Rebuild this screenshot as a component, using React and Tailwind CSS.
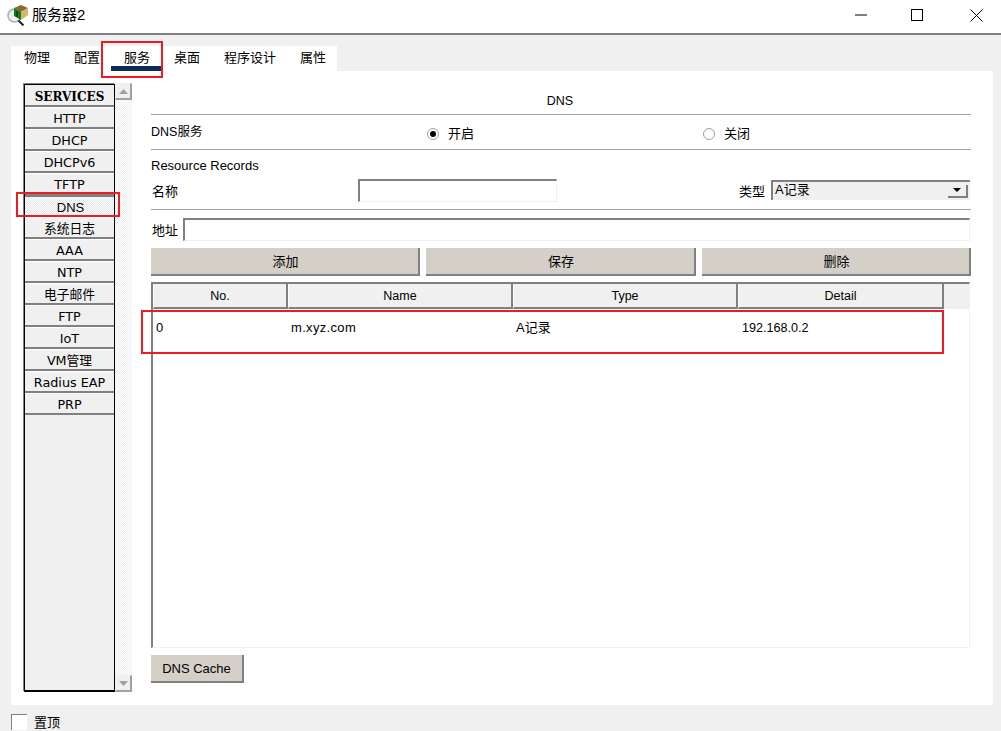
import React from "react";

const services = ["HTTP", "DHCP", "DHCPv6", "TFTP", "DNS", "系统日志", "AAA", "NTP", "电子邮件", "FTP", "IoT", "VM管理", "Radius EAP", "PRP"];
const tabs = ["物理", "配置", "服务", "桌面", "程序设计", "属性"];
const cols = [
  { name: "No.", w: "w-[135px]" },
  { name: "Name", w: "w-[225px]" },
  { name: "Type", w: "w-[225px]" },
  { name: "Detail", w: "w-[206px]" },
];

const font = "font-['Liberation_Sans','Noto_Sans_CJK_SC',sans-serif]";

const Rule = () => <div className="h-px bg-[#a0a0a0]" />;

const GrayButton = ({ children, className }) => (
  <button className={`flex items-center justify-center border-r-2 border-b-2 border-[#808080] bg-[#d4d0c8] pt-[2px] text-[13px] text-black ${className}`}>
    {children}
  </button>
);

const Field = ({ className }) => <div className={`border-t-2 border-l-2 border-t-[#808080] border-l-[#808080] border-r border-b border-r-[#f0f0f0] border-b-[#f0f0f0] bg-white ${className}`} />;

const Radio = ({ on, label, className }) => (
  <div className={`flex items-center gap-[9px] ${className}`}>
    <span className="flex h-[12px] w-[12px] items-center justify-center rounded-full border border-[#a0a0a0] bg-white">
      {on && <span className="h-[6px] w-[6px] rounded-full bg-black" />}
    </span>
    <span className="text-[13px]">{label}</span>
  </div>
);

const AppIcon = () => (
  <svg width="22" height="22" viewBox="0 0 22 22" className="ml-[7px] shrink-0">
    <circle cx="7.5" cy="11.5" r="6.5" fill="#eef2ee" stroke="#a8b0a8" strokeWidth="1.5" />
    <path d="M11.5 16.5l5 5" stroke="#222" strokeWidth="2" />
    <path d="M7 4l7-3 7 3-7 4z" fill="#8a6a2c" />
    <path d="M7 4l7 4v8l-7-4z" fill="#157a1e" />
    <path d="M14 8l7-4v7l-7 5z" fill="#d6b566" />
    <path d="M9 7l2 1v5l-2-1z" fill="#0a4a10" />
  </svg>
);

const ArrowBtn = ({ up }) => (
  <div className="flex h-[17px] w-[17px] items-center justify-center border-r-2 border-b-2 border-[#a0a0a0] border-t border-l border-t-[#f0f0f0] border-l-[#f0f0f0] bg-[#f0f0f0]">
    <svg width="9" height="5" viewBox="0 0 9 5">
      <path d={up ? "M4.5 0L9 5H0z" : "M4.5 5L9 0H0z"} fill="#a0a0a0" />
    </svg>
  </div>
);

export default function App() {
  return (
    <div className={`relative h-[731px] w-[1001px] overflow-hidden bg-[#f0f0f0] text-black ${font}`}>
      {/* title bar */}
      <div className="flex h-[35px] items-center border-b-2 border-[#808080] bg-white pb-[3px]">
        <AppIcon />
        <span className="ml-[3px] text-[15px]">服务器2</span>
        <div className="ml-auto flex items-center">
          <svg width="14" height="2" viewBox="0 0 14 2" className="mr-[42px]"><path d="M0 1h12" stroke="#000" /></svg>
          <div className="mr-[47px] h-[12px] w-[12px] border border-black" />
          <svg width="13" height="13" viewBox="0 0 13 13" className="mr-[18px]"><path d="M.5.5l12 12M12.5.5l-12 12" stroke="#000" /></svg>
        </div>
      </div>

      {/* tabs */}
      <div className="ml-[11px] mt-[11px] flex h-[25px] w-[326px] gap-[24px] bg-white pl-[13px] pt-[4px] text-[13px]">
        {tabs.map((t) => (
          <div key={t} className={t === "服务" ? "relative leading-[16px]" : "leading-[16px]"}>
            {t}
            {t === "服务" && <div className="absolute left-[-13px] top-[16px] h-[5px] w-[50px] bg-[#0e2a56]" />}
          </div>
        ))}
      </div>

      {/* panel */}
      <div className="mx-[11px] flex h-[634px] w-[982px] bg-white pl-[13px] pt-[13px]">
        {/* service list */}
        <div className="flex h-[608px] w-[91px] flex-col border border-b-2 border-[#000] bg-[#f0f0f0] font-['DejaVu_Sans','Noto_Sans_CJK_SC',sans-serif] text-[12.75px] shadow-[-1px_-1px_0_#808080]">
          <div className="flex h-[22px] shrink-0 items-center justify-center border-b-2 border-[#808080] pt-[3px] font-['DejaVu_Serif',serif] text-[12px] font-bold">SERVICES</div>
          {services.map((s) =>
            s === "DNS" ? (
              <div key={s} className="flex h-[22px] shrink-0 items-center justify-center border-t-2 border-[#808080] bg-white bg-[repeating-conic-gradient(#e4e4e4_0_25%,#ffffff_0_50%)] bg-[length:2px_2px] pl-[2px] pt-[2px] font-['Liberation_Sans',sans-serif] text-[13px]">{s}</div>
            ) : (
              <div key={s} className={`flex h-[22px] shrink-0 items-center justify-center border-t border-t-white border-b-2 border-[#808080] pt-[3px] ${s === "TFTP" ? "border-b-0" : ""}`}>{s}</div>
            )
          )}
        </div>
        <div className="-mt-px flex h-[609px] w-[17px] flex-col justify-between bg-[repeating-conic-gradient(#eeeeee_0_25%,#ffffff_0_50%)] bg-[length:2px_2px]">
          <ArrowBtn up />
          <ArrowBtn />
        </div>

        {/* dns form */}
        <div className="-mt-px ml-[19px] w-[820px]">
          <div className="flex h-[31px] items-end justify-center pb-[3px] pr-[2px] text-[12.5px]">DNS</div>
          <Rule />
          <div className="relative flex h-[34px] items-center text-[12.5px]">
            <span className="pt-px">DNS服务</span>
            <Radio on label="开启" className="absolute left-[276px] top-[9px]" />
            <Radio label="关闭" className="absolute left-[552px] top-[9px]" />
          </div>
          <Rule />
          <div className="flex h-[29px] items-center pt-[2px] text-[13px]">Resource Records</div>
          <div className="flex h-[30px] items-start text-[13px]">
            <span className="w-[207px] pl-px pt-[3px]">名称</span>
            <Field className="h-[23px] w-[199px]" />
            <span className="ml-[182px] pt-[3px]">类型</span>
            <div className="ml-[6px] mt-px flex h-[20px] w-[199px] items-center justify-between border-t-2 border-l-2 border-[#808080] bg-[#f0f0f0] pl-[2px] pr-[2px]">
              <span className="pb-[2px] text-[13px] leading-[14px]">A记录</span>
              <div className="flex h-[13px] w-[20px] items-center justify-center border-r-2 border-b-2 border-[#808080] bg-[#f0f0f0]">
                <svg width="8" height="4" viewBox="0 0 8 4"><path d="M0 0h8L4 4z" fill="#000" /></svg>
              </div>
            </div>
          </div>
          <Rule />
          <div className="mt-[8px] flex h-[23px] text-[13px]">
            <span className="w-[32px] pl-px pt-[3px]">地址</span>
            <Field className="h-[23px] w-[787px]" />
          </div>
          <div className="mt-[7px] flex gap-[6px]">
            <GrayButton className="h-[28px] w-[269px] pl-[2px]">添加</GrayButton>
            <GrayButton className="h-[28px] w-[270px] pl-[2px]">保存</GrayButton>
            <GrayButton className="h-[28px] w-[269px] pl-[2px]">删除</GrayButton>
          </div>

          {/* records table */}
          <div className="mt-[6px] flex h-[366px] w-[819px] flex-col border-t-2 border-l-2 border-r border-b border-t-[#808080] border-l-[#808080] border-r-[#f0f0f0] border-b-[#f0f0f0] bg-white">
            <div className="flex h-[25px] shrink-0 bg-[#f0f0f0] text-[12.5px]">
              {cols.map((c) => (
                <div key={c.name} className={`flex items-center justify-center border-r-2 border-b-2 border-[#808080] border-l border-l-white pt-px ${c.w}`}>{c.name}</div>
              ))}
            </div>
            <div className="flex pt-[12px] text-[13px] leading-[14px]">
              <span className="w-[134px] pl-[3px]">0</span>
              <span className="w-[225px] pl-[4px] tracking-[0.33px]">m.xyz.com</span>
              <span className="w-[225px] pl-[4px]">A记录</span>
              <span className="w-[206px] pl-[5px] text-[12.6px]">192.168.0.2</span>
            </div>
          </div>
          <GrayButton className="mt-[7px] h-[28px] w-[93px]">DNS Cache</GrayButton>
        </div>
      </div>

      {/* keep on top */}
      <div className="ml-[11px] mt-[8px] flex items-center gap-[7px] text-[13px] leading-[16px]">
        <div className="h-[16px] w-[16px] border-t border-l border-[#808080] border-r-white border-b-white bg-white" />
        <span className="pt-[2px]">置顶</span>
      </div>

      {/* red annotation boxes */}
      <div className="absolute left-[101px] top-[41px] h-[37px] w-[62px] border-2 border-[#ed1c24]" />
      <div className="absolute left-[16px] top-[192px] h-[25px] w-[104px] border-2 border-[#ed1c24]" />
      <div className="absolute left-[141px] top-[310px] h-[44px] w-[803px] border-2 border-[#ed1c24]" />
    </div>
  );
}
